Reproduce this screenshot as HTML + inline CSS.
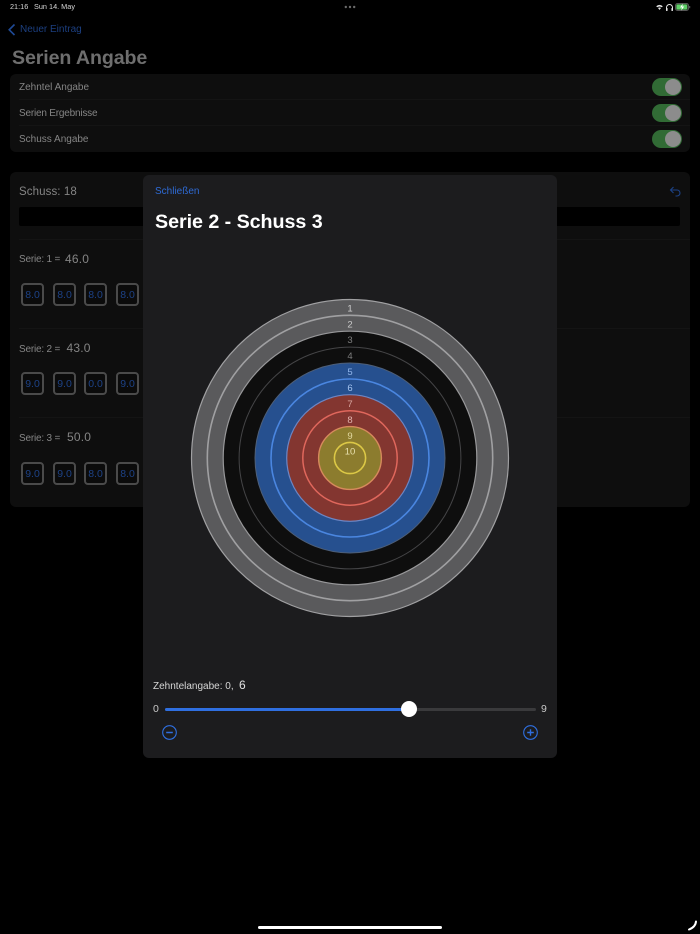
<!DOCTYPE html>
<html><head><meta charset="utf-8">
<style>
html,body{margin:0;padding:0;background:#000;}
#p{position:relative;width:700px;height:934px;overflow:hidden;background:#000;font-family:"Liberation Sans",sans-serif;color:#fff;}
.a{position:absolute;white-space:nowrap;}
.card{position:absolute;background:#0e0e0e;border-radius:6px;}
.lbl{position:absolute;left:19px;font-size:10px;line-height:14px;color:#858585;white-space:nowrap;}
.sr{letter-spacing:-.2px;}
.sep{position:absolute;height:1px;background:#141414;}
.tg{position:absolute;left:652px;width:30px;height:18px;border-radius:9px;background:#316b35;}
.tg i{position:absolute;right:1px;top:1px;width:16px;height:16px;border-radius:50%;background:#8c8c8c;}
.bx{position:absolute;width:19px;height:19px;border:2px solid #4a4a4a;border-radius:4px;color:#1d4286;font-size:10.5px;line-height:21px;text-align:center;background:#0b0b0b;}
.num{position:absolute;font-size:12px;line-height:14px;color:#848484;letter-spacing:.2px;white-space:nowrap;}
</style></head>
<body><div id="p">

<div class="a" style="left:10px;top:2px;font-size:7.3px;line-height:10px;color:#d8d8d8;">21:16</div>
<div class="a" style="left:34px;top:2px;font-size:7.3px;line-height:10px;color:#d8d8d8;">Sun 14. May</div>
<svg class="a" style="left:344px;top:5px" width="12" height="4"><circle cx="1.8" cy="2" r="1.2" fill="#6b6b6b"/><circle cx="6" cy="2" r="1.2" fill="#6b6b6b"/><circle cx="10.2" cy="2" r="1.2" fill="#6b6b6b"/></svg>
<svg class="a" style="left:655px;top:3px" width="36" height="9" viewBox="0 0 36 9">
<path d="M1.2 3.2Q4.5 .6 7.8 3.2L6.8 4.3Q4.5 2.6 2.2 4.3ZM3 5Q4.5 3.9 6 5L4.5 7Z" fill="#e6e6e6"/>
<path d="M11.5 7V4.5a3 3 0 0 1 6 0V7" fill="none" stroke="#e6e6e6" stroke-width="1"/><rect x="11" y="5" width="1.6" height="3" rx=".6" fill="#e6e6e6"/><rect x="16.4" y="5" width="1.6" height="3" rx=".6" fill="#e6e6e6"/>
<rect x="20.5" y=".5" width="13" height="7" rx="2" fill="#2b4a2d" stroke="#555"/><rect x="21.5" y="1.5" width="10.5" height="5" rx="1" fill="#5fd068"/><path d="M27.8 .6L25 4.5H27L26.2 7.6L29.2 3.5H27.2Z" fill="#fff"/><rect x="34.2" y="3" width="1" height="2.2" fill="#666"/>
</svg>

<svg class="a" style="left:7px;top:23px" width="10" height="14" viewBox="0 0 10 14"><path d="M7.5 1.5L2.2 6.8L7.5 12" fill="none" stroke="#1f4a96" stroke-width="1.6"/></svg>
<div class="a" style="left:20px;top:23px;font-size:10px;line-height:14px;color:#1c3f80;">Neuer Eintrag</div>
<div class="a" style="left:12px;top:45.5px;font-size:19.6px;line-height:24px;font-weight:bold;color:#6e6e6e;letter-spacing:-.1px;">Serien Angabe</div>

<div class="card" style="left:10px;top:74px;width:680px;height:78px;"></div>
<div class="sep" style="left:19px;top:99px;width:671px;"></div>
<div class="sep" style="left:19px;top:125px;width:671px;"></div>
<div class="lbl" style="top:80.5px;">Zehntel Angabe</div>
<div class="lbl sr" style="top:106.5px;">Serien Ergebnisse</div>
<div class="lbl" style="top:132.5px;">Schuss Angabe</div>
<div class="tg" style="top:78px"><i></i></div>
<div class="tg" style="top:104px"><i></i></div>
<div class="tg" style="top:130px"><i></i></div>

<div class="card" style="left:10px;top:172px;width:680px;height:335px;"></div>
<div class="a" style="left:19px;top:184.5px;font-size:11.5px;line-height:15px;color:#858585;letter-spacing:.1px;">Schuss: 18</div>
<div class="a" style="left:19px;top:207px;width:661px;height:19px;background:#000;border-radius:2px;"></div>
<svg class="a" style="left:669px;top:185px" width="12" height="13" viewBox="0 0 12 13"><path d="M4.5 2L1.5 5L4.5 8M1.5 5H8a2.8 2.8 0 0 1 0 6H6.5" fill="none" stroke="#1d4286" stroke-width="1.1"/></svg>

<div class="sep" style="left:19px;top:239px;width:671px;"></div>
<div class="sep" style="left:19px;top:328px;width:671px;"></div>
<div class="sep" style="left:19px;top:417px;width:671px;"></div>

<div class="lbl sr" style="top:253px;">Serie: 1 =</div><div class="num" style="left:65px;top:252px;">46.0</div>
<div class="lbl sr" style="top:342.5px;">Serie: 2 =</div><div class="num" style="left:66.5px;top:341px;">43.0</div>
<div class="lbl sr" style="top:431.5px;">Serie: 3 =</div><div class="num" style="left:67px;top:430px;">50.0</div>

<div class="bx" style="left:21px;top:283px">8.0</div><div class="bx" style="left:53px;top:283px">8.0</div><div class="bx" style="left:84px;top:283px">8.0</div><div class="bx" style="left:116px;top:283px">8.0</div>
<div class="bx" style="left:21px;top:372px">9.0</div><div class="bx" style="left:53px;top:372px">9.0</div><div class="bx" style="left:84px;top:372px">0.0</div><div class="bx" style="left:116px;top:372px">9.0</div>
<div class="bx" style="left:21px;top:462px">9.0</div><div class="bx" style="left:53px;top:462px">9.0</div><div class="bx" style="left:84px;top:462px">8.0</div><div class="bx" style="left:116px;top:462px">8.0</div>

<div class="a" style="left:143px;top:175px;width:414px;height:583px;background:#1c1c1e;border-radius:6px;"></div>
<div class="a" style="left:155px;top:184.5px;font-size:10px;line-height:14px;color:#2e6ad4;">Schließen</div>
<div class="a" style="left:155px;top:209px;font-size:19.7px;line-height:26px;font-weight:bold;color:#fff;letter-spacing:-.05px;">Serie 2 - Schuss 3</div>

<svg class="a" style="left:180px;top:288px" width="340" height="340" viewBox="0 0 340 340">
<g transform="translate(170,170)">
<circle r="158.5" fill="#5a5a5c" stroke="#a0a0a2" stroke-width="1.2"/>
<circle r="142.7" fill="#5a5a5c" stroke="#a0a0a2" stroke-width="1.6"/>
<circle r="126.8" fill="#0e0e0e" stroke="#98989a" stroke-width="1.2"/>
<circle r="110.9" fill="#0e0e0e" stroke="#454547" stroke-width="1"/>
<circle r="95" fill="#26508f" stroke="#4e5f78" stroke-width="1"/>
<circle r="79" fill="#26508f" stroke="#4a86e0" stroke-width="1.6"/>
<circle r="63.3" fill="#833630" stroke="#6d86c4" stroke-width="1.2"/>
<circle r="47.2" fill="#833630" stroke="#e0675c" stroke-width="1.5"/>
<circle r="31.4" fill="#8c7c2e" stroke="#d68a5c" stroke-width="1.4"/>
<circle r="15.6" fill="#8c7c2e" stroke="#dcc846" stroke-width="1.6"/>
<g font-family="Liberation Sans, sans-serif" font-size="9.5" text-anchor="middle">
<text y="-146.6" fill="#cfcfcf">1</text>
<text y="-130.6" fill="#c8c8c8">2</text>
<text y="-114.8" fill="#7d7d7d">3</text>
<text y="-98.8" fill="#7d7d7d">4</text>
<text y="-82.8" fill="#8fb4ea">5</text>
<text y="-66.8" fill="#a6c4ee">6</text>
<text y="-51" fill="#d8a8a2">7</text>
<text y="-34.8" fill="#e0b4ae">8</text>
<text y="-19" fill="#e2d9a0">9</text>
<text y="-3.3" fill="#e8e0ae">10</text>
</g>
</g>
</svg>

<div class="a" style="left:153px;top:679.5px;font-size:10px;line-height:14px;color:#d6d6d6;">Zehntelangabe: 0,</div>
<div class="a" style="left:239px;top:678px;font-size:12px;line-height:14px;color:#e2e2e2;">6</div>
<div class="a" style="left:153px;top:702px;font-size:10.5px;line-height:14px;color:#c8c8c8;">0</div>
<div class="a" style="left:541px;top:702px;font-size:10.5px;line-height:14px;color:#c8c8c8;">9</div>
<div class="a" style="left:165px;top:708px;width:371px;height:3px;background:#3a3a3c;border-radius:2px;"></div>
<div class="a" style="left:165px;top:708px;width:244px;height:3px;background:#2f6fe0;border-radius:2px;"></div>
<div class="a" style="left:401px;top:701px;width:16px;height:16px;border-radius:50%;background:#fff;"></div>
<svg class="a" style="left:161px;top:724px" width="17" height="17" viewBox="0 0 17 17"><circle cx="8.5" cy="8.5" r="6.8" fill="none" stroke="#2f6fe0" stroke-width="1.1"/><path d="M5.2 8.5H11.8" stroke="#2f6fe0" stroke-width="1.5"/></svg>
<svg class="a" style="left:522px;top:724px" width="17" height="17" viewBox="0 0 17 17"><circle cx="8.5" cy="8.5" r="6.8" fill="none" stroke="#2f6fe0" stroke-width="1.1"/><path d="M5.2 8.5H11.8M8.5 5.2V11.8" stroke="#2f6fe0" stroke-width="1.4"/></svg>

<div class="a" style="left:258px;top:926px;width:184px;height:3px;background:#fff;border-radius:2px;"></div>
<svg class="a" style="left:684px;top:919px" width="14" height="14" viewBox="0 0 14 14"><path d="M12 2.5Q11.5 8 5 10.5" fill="none" stroke="#fff" stroke-width="2" stroke-linecap="round"/></svg>

</div></body></html>
